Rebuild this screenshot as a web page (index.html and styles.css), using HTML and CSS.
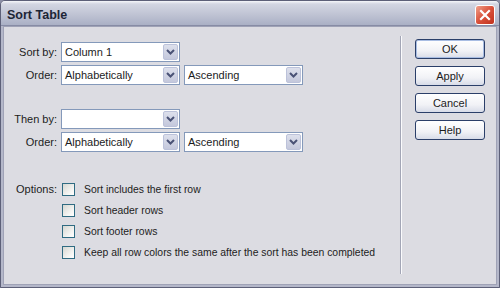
FILE: index.html
```html
<!DOCTYPE html>
<html lang="en">
<head>
  <meta charset="UTF-8" />
  <title>Sort Table</title>
  <link rel="stylesheet" href="styles.css">
</head>
<body>

  <div class="window">
    <div class="titlebar">
      <span class="title">Sort Table</span>
      <div class="close">
        <svg width="12" height="12" viewBox="0 0 12 12">
          <path d="M2 2 L10 10 M10 2 L2 10" stroke="#fff" stroke-width="2.2" stroke-linecap="square"/>
        </svg>
      </div>
    </div>

    <div class="panel">
      <div class="main">

        <div class="form first">
          <div class="label">Sort by:</div>
          <div class="combo"><span class="value">Column 1</span><span class="arrow"><svg width="9" height="6" viewBox="0 0 9 6"><path d="M1 1 L4.5 4.5 L8 1" stroke="#4a5276" stroke-width="2" fill="none"/></svg></span></div>
          <div class="label">Order:</div>
          <div class="pair">
            <div class="combo"><span class="value">Alphabetically</span><span class="arrow"><svg width="9" height="6" viewBox="0 0 9 6"><path d="M1 1 L4.5 4.5 L8 1" stroke="#4a5276" stroke-width="2" fill="none"/></svg></span></div>
            <div class="combo"><span class="value">Ascending</span><span class="arrow"><svg width="9" height="6" viewBox="0 0 9 6"><path d="M1 1 L4.5 4.5 L8 1" stroke="#4a5276" stroke-width="2" fill="none"/></svg></span></div>
          </div>
        </div>

        <div class="form second">
          <div class="label">Then by:</div>
          <div class="combo"><span class="value"></span><span class="arrow"><svg width="9" height="6" viewBox="0 0 9 6"><path d="M1 1 L4.5 4.5 L8 1" stroke="#4a5276" stroke-width="2" fill="none"/></svg></span></div>
          <div class="label">Order:</div>
          <div class="pair">
            <div class="combo"><span class="value">Alphabetically</span><span class="arrow"><svg width="9" height="6" viewBox="0 0 9 6"><path d="M1 1 L4.5 4.5 L8 1" stroke="#4a5276" stroke-width="2" fill="none"/></svg></span></div>
            <div class="combo"><span class="value">Ascending</span><span class="arrow"><svg width="9" height="6" viewBox="0 0 9 6"><path d="M1 1 L4.5 4.5 L8 1" stroke="#4a5276" stroke-width="2" fill="none"/></svg></span></div>
          </div>
        </div>

        <div class="form options">
          <div class="label top">Options:</div>
          <div class="checks">
            <div class="check"><span class="box"></span>Sort includes the first row</div>
            <div class="check"><span class="box"></span>Sort header rows</div>
            <div class="check"><span class="box"></span>Sort footer rows</div>
            <div class="check"><span class="box"></span>Keep all row colors the same after the sort has been completed</div>
          </div>
        </div>

      </div>

      <div class="sep"></div>

      <div class="buttons">
        <div class="btn default">OK</div>
        <div class="btn">Apply</div>
        <div class="btn">Cancel</div>
        <div class="btn">Help</div>
      </div>
    </div>
  </div>

</body>
</html>
```

FILE: styles.css
```css
* {
  box-sizing: border-box;
}

html, body {
  margin: 0;
  height: 100%;
}

body {
  font-family: 'Liberation Sans', Arial, sans-serif;
  font-size: 11px;
  color: #1c1c1c;
  background: #8d90a7;
}

.window {
  height: 288px;
  display: flex;
  flex-direction: column;
  border: 1px solid #5d6078;
  border-radius: 5px 5px 0 0;
  background: #b4b7c9;
}

.titlebar {
  height: 25px;
  display: flex;
  align-items: center;
  justify-content: space-between;
  padding: 4px 4px 0 6px;
  border-radius: 4px 4px 0 0;
  background: linear-gradient(#f6f7fa 0, #d3d6e2 3px, #c0c4d4 55%, #aab0c5 100%);
  border-bottom: 1px solid #878ca5;
}

.title {
  font-size: 12.5px;
  font-weight: bold;
  color: #1d2536;
}

.close {
  width: 20px;
  height: 20px;
  display: flex;
  align-items: center;
  justify-content: center;
  border: 1px solid #fff;
  border-radius: 3px;
  background: linear-gradient(135deg, #f0a08a, #d9503a 50%, #c0321e);
}

.panel {
  flex: 1;
  display: flex;
  margin: 0 2px 2px;
  border: 1px solid #9fa2b6;
  background: #dcdce2;
}

.main {
  flex: 1;
  padding-top: 15px;
}

.form {
  display: grid;
  grid-template-columns: 53px auto;
  column-gap: 4px;
  row-gap: 3px;
  align-items: center;
}

.second {
  margin-top: 24px;
}

.options {
  margin-top: 27px;
  align-items: start;
}

.label {
  text-align: right;
  white-space: nowrap;
}

.label.top {
  line-height: 21px;
}

.pair {
  display: flex;
  gap: 4px;
}

.combo {
  width: 119px;
  height: 20px;
  display: flex;
  align-items: center;
  padding: 0 1px 0 3px;
  border: 1px solid #8499ba;
  background: #fff;
}

.combo .value {
  flex: 1;
}

.arrow {
  width: 15px;
  height: 16px;
  display: flex;
  align-items: center;
  justify-content: center;
  border: 1px solid #bcc2da;
  border-radius: 2px;
  background: linear-gradient(#dde0ec, #c4c8dc);
}

.check {
  height: 21px;
  display: flex;
  align-items: center;
  gap: 9px;
  padding-left: 1px;
  font-size: 10.4px;
  white-space: nowrap;
}

.box {
  width: 13px;
  height: 13px;
  border: 1px solid #2f6b82;
  background: linear-gradient(135deg, #d6d7d2, #f6f6f4 70%, #fff);
}

.sep {
  width: 2px;
  margin: 9px 0 10px;
  border-left: 1px solid #a3a6b6;
  border-right: 1px solid #fbfbfd;
}

.buttons {
  width: 94px;
  padding: 12px 11px 0 13px;
  display: flex;
  flex-direction: column;
  gap: 7px;
}

.btn {
  height: 20px;
  display: flex;
  align-items: center;
  justify-content: center;
  border: 1px solid #2b3f69;
  border-radius: 3px;
  background: linear-gradient(#ffffff, #f1f2f6 60%, #d8dce8);
  color: #1c1c1c;
}

.btn.default {
  box-shadow: inset 0 0 0 1px #a8bde3;
}
```
